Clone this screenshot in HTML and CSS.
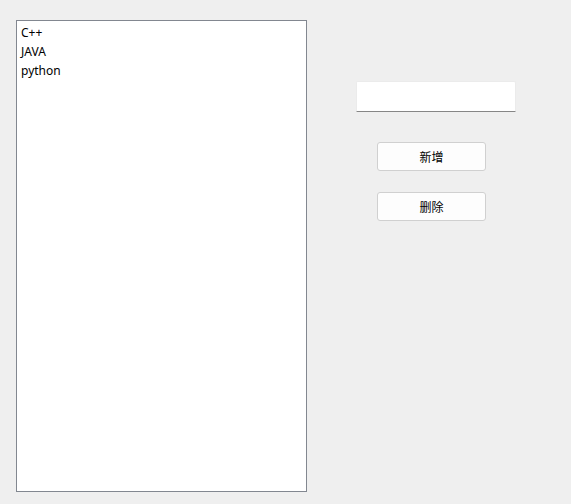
FILE: index.html
```html
<!DOCTYPE html>
<html lang="zh-CN">
<head>
    <meta charset="UTF-8">
    <title>列表</title>
    <link rel="stylesheet" href="styles.css">
</head>
<body>
    <div class="window">
        <ul class="list-box">
            <li>C++</li>
            <li>JAVA</li>
            <li>python</li>
        </ul>

        <div class="side-panel">
            <input class="text-input" type="text">
            <button class="btn btn-add">新增</button>
            <button class="btn btn-delete">删除</button>
        </div>
    </div>
</body>
</html>
```

FILE: styles.css
```css
:root {
    --background: #efefef;
    --list-border: #828790;
    --button-border: #d0d0d0;
    --button-bg: #fdfdfd;
}

html, body {
    margin: 0;
    padding: 0;
}

body {
    font-family: 'Segoe UI', 'Noto Sans', 'Noto Sans CJK SC', sans-serif;
    font-size: 12px;
    color: #000000;
    background-color: var(--background);
    width: 571px;
    height: 504px;
    overflow: hidden;
}

.window {
    display: flex;
    align-items: flex-start;
    padding: 20px 0 0 16px;
}

.list-box {
    list-style: none;
    margin: 0;
    padding: 2px 4px 0;
    width: 281px;
    height: 468px;
    background-color: #ffffff;
    border: 1px solid var(--list-border);
}

.list-box li {
    line-height: 19px;
    height: 19px;
}

.side-panel {
    display: flex;
    flex-direction: column;
    align-items: flex-start;
    padding-top: 61px;
    margin-left: 49px;
}

.text-input {
    box-sizing: border-box;
    width: 160px;
    height: 31px;
    margin: 0;
    padding: 0 6px;
    background-color: #ffffff;
    border: 1px solid #ebebeb;
    border-bottom: 1px solid #868686;
    border-radius: 2px 2px 0 0;
    outline: none;
    font: inherit;
}

.btn {
    box-sizing: border-box;
    width: 109px;
    height: 29px;
    margin: 0 0 0 21px;
    padding: 0;
    background-color: var(--button-bg);
    border: 1px solid var(--button-border);
    border-radius: 3px;
    font-family: 'Noto Sans CJK SC', sans-serif;
    font-size: 12px;
    color: #000000;
}

.btn-add {
    margin-top: 30px;
}

.btn-delete {
    margin-top: 21px;
}
```
